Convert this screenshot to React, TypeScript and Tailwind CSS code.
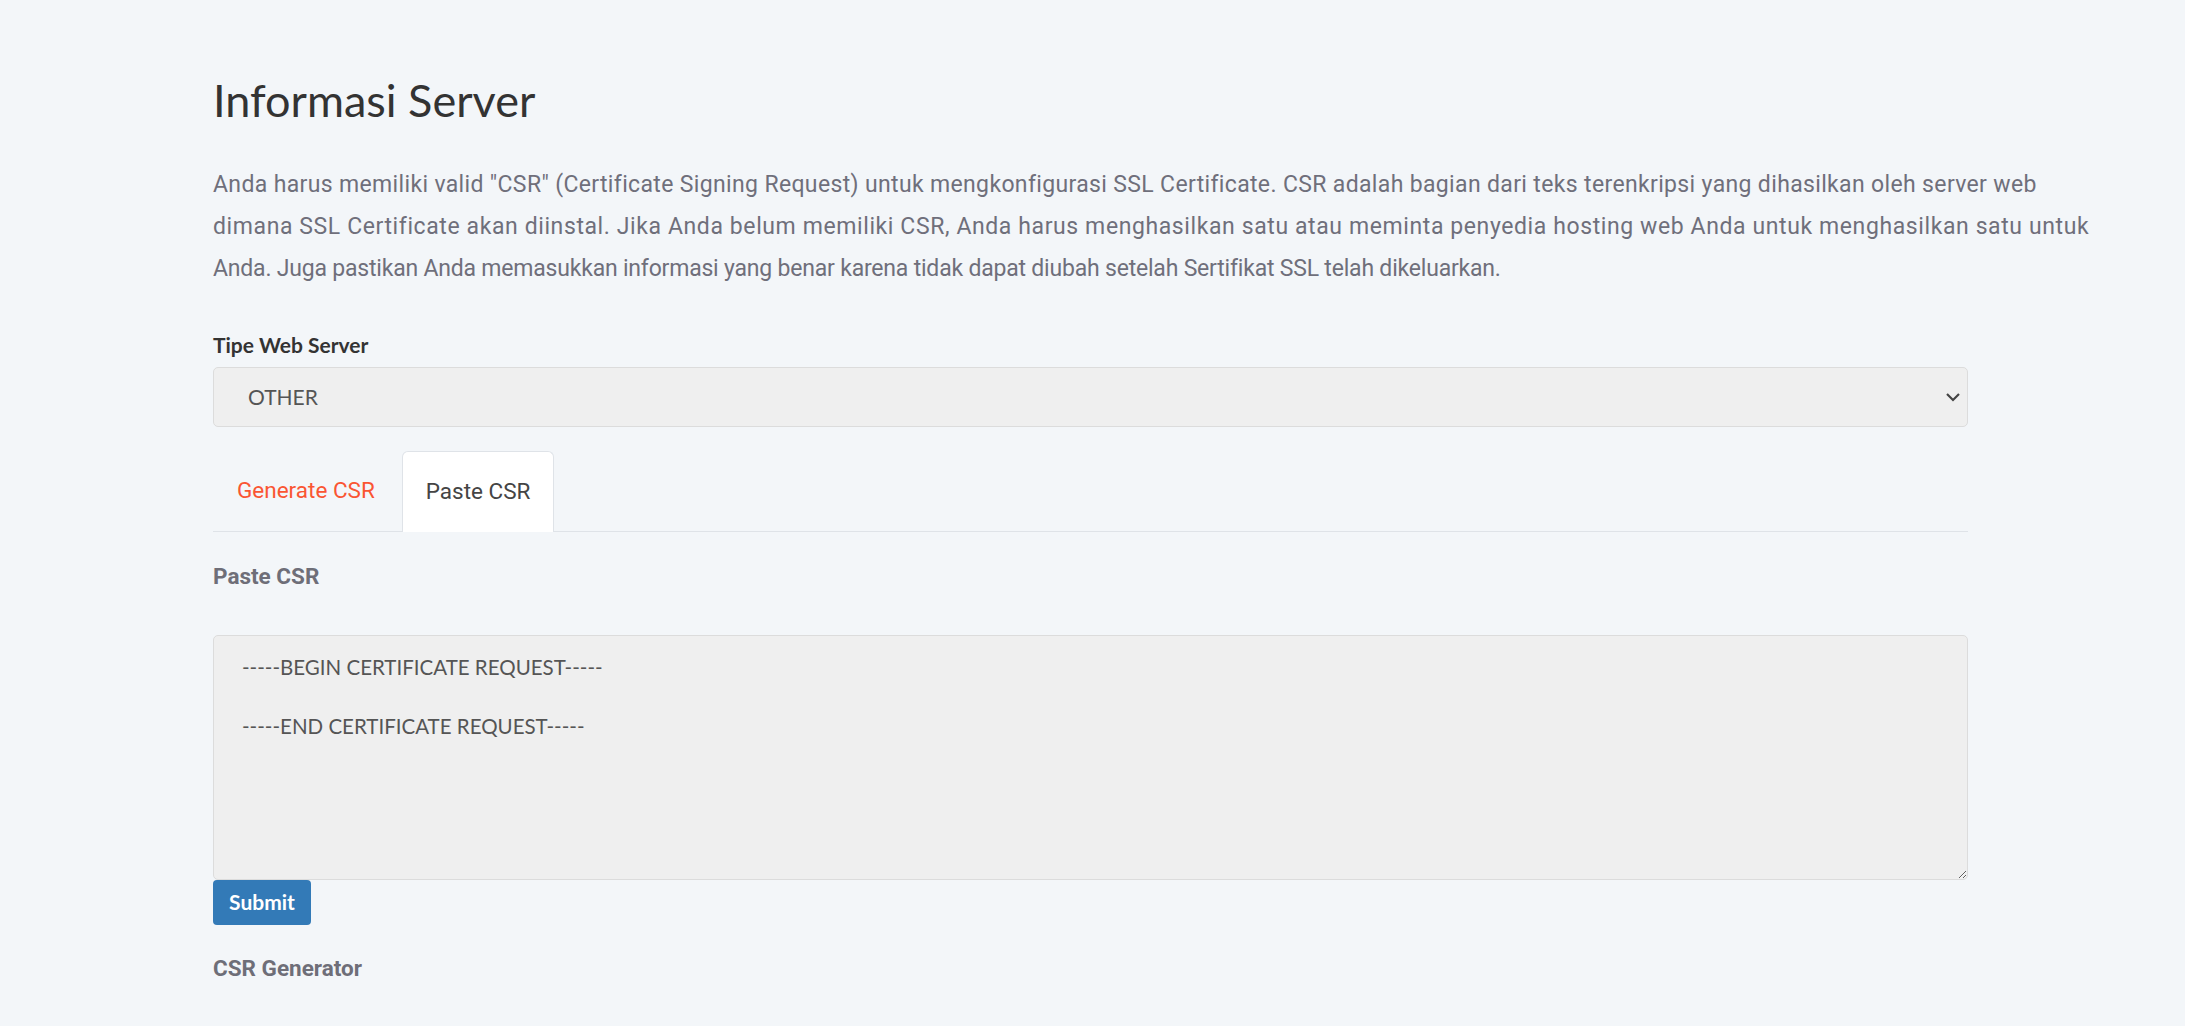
import React from "react";

export default function App() {
  return (
    <div className="min-h-[1026px] w-full bg-[#f3f6f9]">
      <div className="pl-[213px] pt-[76px]">
        <h1 className="font-['Lato',sans-serif] text-[45px] leading-[49.5px] font-normal text-[#333333]">
          Informasi Server
        </h1>
        <p className="mt-[38px] whitespace-nowrap font-['Roboto',sans-serif] text-[23px] leading-[42px] text-[#6f6f7b]">
          <span className="block tracking-[0.35px]">
            Anda harus memiliki valid "CSR" (Certificate Signing Request) untuk mengkonfigurasi SSL Certificate. CSR adalah bagian dari teks terenkripsi yang dihasilkan oleh server web
          </span>
          <span className="block tracking-[0.6px]">
            dimana SSL Certificate akan diinstal. Jika Anda belum memiliki CSR, Anda harus menghasilkan satu atau meminta penyedia hosting web Anda untuk menghasilkan satu untuk
          </span>
          <span className="block tracking-[-0.2px]">
            Anda. Juga pastikan Anda memasukkan informasi yang benar karena tidak dapat diubah setelah Sertifikat SSL telah dikeluarkan.
          </span>
        </p>
        <div className="w-[1755px]">
          <label className="mt-[41px] block font-['Lato',sans-serif] text-[21px] leading-[28px] font-bold text-[#333333]">
            Tipe Web Server
          </label>
          <div className="mt-[8px] flex h-[60px] items-center justify-between rounded-[5px] border border-[#dcdcdc] bg-[#efefef] pl-[34px] pr-[6px]">
            <span className="font-['Lato',sans-serif] text-[21px] text-[#555555]">OTHER</span>
            <svg width="16" height="10" viewBox="0 0 16 10">
              <path d="M2 2 L8 8 L14 2" fill="none" stroke="#444" strokeWidth="2.2" />
            </svg>
          </div>
          <div className="mt-[24px] flex items-end border-b border-[#dfe3e8]">
            <div className="flex h-[80px] items-center px-[24px] font-['Roboto',sans-serif] text-[22.5px] text-[#fa5533]">
              Generate CSR
            </div>
            <div className="-mb-px ml-[3px] flex h-[81px] items-center rounded-t-[6px] border border-b-0 border-[#dfe3e8] bg-white px-[23px] font-['Roboto',sans-serif] text-[22.5px] text-[#444444]">
              Paste CSR
            </div>
          </div>
          <h3 className="mt-[29px] font-['Roboto',sans-serif] text-[22.5px] leading-[30px] font-bold text-[#6e6e78]">
            Paste CSR
          </h3>
          <textarea
            className="mt-[44px] block h-[245px] w-full rounded-[5px] border border-[#dcdcdc] bg-[#efefef] pl-[28px] pt-[17px] font-['Lato',sans-serif] text-[20.5px] leading-[29.5px] text-[#555555] outline-none"
            defaultValue={"-----BEGIN CERTIFICATE REQUEST-----\n\n-----END CERTIFICATE REQUEST-----"}
          />
          <button className="block h-[45px] w-[98px] rounded-[4px] bg-[#337ab7] font-['Lato',sans-serif] text-[21px] font-bold text-white">
            Submit
          </button>
          <h3 className="mt-[28px] font-['Roboto',sans-serif] text-[22.5px] leading-[30px] font-bold text-[#6e6e78]">
            CSR Generator
          </h3>
        </div>
      </div>
    </div>
  );
}
